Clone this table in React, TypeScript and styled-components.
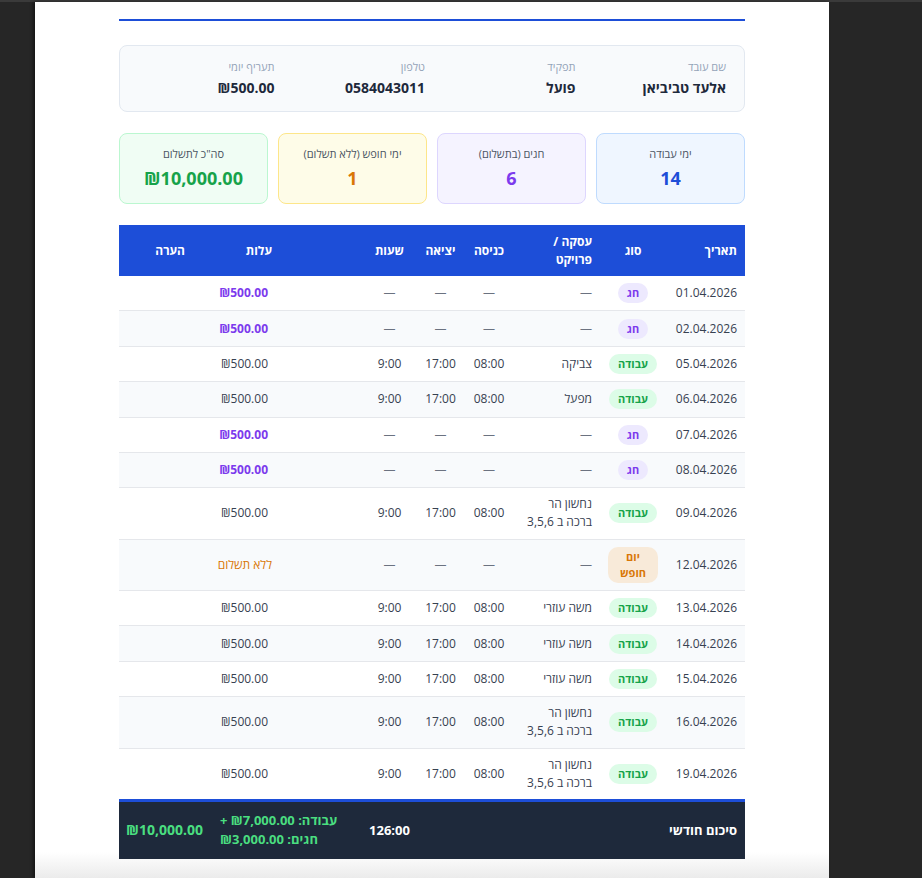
import React from 'react';
import styled, { createGlobalStyle } from 'styled-components';

const GlobalStyle = createGlobalStyle`
  html, body {
    margin: 0;
    padding: 0;
    background: #262626;
    overflow: hidden;
  }
  body {
    font-family: 'Open Sans', 'Noto Sans', 'DejaVu Sans', sans-serif;
  }
`;

type Kind = 'holiday' | 'work' | 'vacation';

type Row = {
  date: string;
  kind: Kind;
  project?: string;
  start?: string;
  end?: string;
  hours?: string;
};

const ROWS: Row[] = [
  { date: '01.04.2026', kind: 'holiday' },
  { date: '02.04.2026', kind: 'holiday' },
  { date: '05.04.2026', kind: 'work', project: 'צביקה', start: '08:00', end: '17:00', hours: '9:00' },
  { date: '06.04.2026', kind: 'work', project: 'מפעל', start: '08:00', end: '17:00', hours: '9:00' },
  { date: '07.04.2026', kind: 'holiday' },
  { date: '08.04.2026', kind: 'holiday' },
  { date: '09.04.2026', kind: 'work', project: 'נחשון הר ברכה ב 3,5,6', start: '08:00', end: '17:00', hours: '9:00' },
  { date: '12.04.2026', kind: 'vacation' },
  { date: '13.04.2026', kind: 'work', project: 'משה עוזרי', start: '08:00', end: '17:00', hours: '9:00' },
  { date: '14.04.2026', kind: 'work', project: 'משה עוזרי', start: '08:00', end: '17:00', hours: '9:00' },
  { date: '15.04.2026', kind: 'work', project: 'משה עוזרי', start: '08:00', end: '17:00', hours: '9:00' },
  { date: '16.04.2026', kind: 'work', project: 'נחשון הר ברכה ב 3,5,6', start: '08:00', end: '17:00', hours: '9:00' },
  { date: '19.04.2026', kind: 'work', project: 'נחשון הר ברכה ב 3,5,6', start: '08:00', end: '17:00', hours: '9:00' },
];

const KIND_LABEL: Record<Kind, string> = {
  holiday: 'חג',
  work: 'עבודה',
  vacation: 'יום חופש',
};

const INFO = [
  { label: 'שם עובד', value: 'אלעד טביביאן' },
  { label: 'תפקיד', value: 'פועל' },
  { label: 'טלפון', value: '0584043011' },
  { label: 'תעריף יומי', value: '₪500.00' },
];

type Tone = 'blue' | 'purple' | 'amber' | 'green';

const STATS: { label: string; value: string; tone: Tone }[] = [
  { label: 'ימי עבודה', value: '14', tone: 'blue' },
  { label: 'חגים (בתשלום)', value: '6', tone: 'purple' },
  { label: 'ימי חופש (ללא תשלום)', value: '1', tone: 'amber' },
  { label: 'סה"כ לתשלום', value: '₪10,000.00', tone: 'green' },
];

const TONES: Record<Tone, { bg: string; border: string; fg: string }> = {
  blue: { bg: '#eff6ff', border: '#bfdbfe', fg: '#1d4ed8' },
  purple: { bg: '#f5f3ff', border: '#ddd6fe', fg: '#7c3aed' },
  amber: { bg: '#fefce8', border: '#fde68a', fg: '#d97706' },
  green: { bg: '#f0fdf4', border: '#bbf7d0', fg: '#16a34a' },
};

export default function App() {
  return (
    <>
      <GlobalStyle />
      <Viewer>
        <TopStrip />
        <Stage>
          <Sheet>
            <Report>
              <HeaderRule />

              <InfoCard>
                {INFO.map((item) => (
                  <InfoItem key={item.label}>
                    <InfoLabel>{item.label}</InfoLabel>
                    <InfoValue>{item.value}</InfoValue>
                  </InfoItem>
                ))}
              </InfoCard>

              <Stats>
                {STATS.map((s) => (
                  <StatCard key={s.label} $tone={s.tone}>
                    <StatLabel>{s.label}</StatLabel>
                    <StatValue $tone={s.tone}>{s.value}</StatValue>
                  </StatCard>
                ))}
              </Stats>

              <Table>
                <colgroup>
                  <col style={{ width: 79 }} />
                  <col style={{ width: 66 }} />
                  <col style={{ width: 86 }} />
                  <col style={{ width: 50 }} />
                  <col style={{ width: 47 }} />
                  <col style={{ width: 55 }} />
                  <col style={{ width: 169 }} />
                  <col style={{ width: 74 }} />
                </colgroup>
                <thead>
                  <tr>
                    <Th>תאריך</Th>
                    <Th $center>סוג</Th>
                    <Th>עסקה / פרויקט</Th>
                    <Th $center>כניסה</Th>
                    <Th $center>יציאה</Th>
                    <Th $center>שעות</Th>
                    <Th $cost>עלות</Th>
                    <Th>הערה</Th>
                  </tr>
                </thead>
                <tbody>
                  {ROWS.map((r) => (
                    <Tr key={r.date}>
                      <Td>{r.date}</Td>
                      <Td $center>
                        <Badge $kind={r.kind}>{KIND_LABEL[r.kind]}</Badge>
                      </Td>
                      <Td>{r.project ?? <Dash>—</Dash>}</Td>
                      <Td $center>{r.start ?? <Dash>—</Dash>}</Td>
                      <Td $center>{r.end ?? <Dash>—</Dash>}</Td>
                      <Td $center>{r.hours ?? <Dash>—</Dash>}</Td>
                      <Td $cost>
                        <Cost $kind={r.kind}>
                          {r.kind === 'vacation' ? 'ללא תשלום' : '₪500.00'}
                        </Cost>
                      </Td>
                      <Td />
                    </Tr>
                  ))}
                </tbody>
                <tfoot>
                  <tr>
                    <FootCell colSpan={8}>
                      <Summary>
                        <SummaryTitle>סיכום חודשי</SummaryTitle>
                        <SummaryHours>126:00</SummaryHours>
                        <SummaryBreakdown>
                          עבודה: ₪7,000.00 + חגים: ₪3,000.00
                        </SummaryBreakdown>
                        <SummaryTotal>₪10,000.00</SummaryTotal>
                      </Summary>
                    </FootCell>
                  </tr>
                </tfoot>
              </Table>
            </Report>
          </Sheet>
        </Stage>
      </Viewer>
    </>
  );
}

const Viewer = styled.div`
  height: 878px;
  display: flex;
  flex-direction: column;
  background: #262626;
`;

const TopStrip = styled.div`
  height: 2px;
  background: #3a3a3a;
`;

const Stage = styled.div`
  flex: 1;
  display: flex;
  padding-left: 35px;
  min-height: 0;
`;

const Sheet = styled.div`
  width: 794px;
  height: 100%;
  box-sizing: border-box;
  padding: 0 84px;
  background: linear-gradient(
    to bottom,
    #ffffff 0,
    #ffffff calc(100% - 26px),
    #ebebeb 100%
  );
  box-shadow: -2px 0 3px rgba(0, 0, 0, 0.45);
  overflow: hidden;
`;

const Report = styled.div`
  direction: rtl;
  display: flex;
  flex-direction: column;
  padding-top: 17px;
  color: #1f2937;
`;

const HeaderRule = styled.div`
  border-bottom: 2px solid #1d4ed8;
  margin-bottom: 24px;
`;

const InfoCard = styled.div`
  display: grid;
  grid-template-columns: repeat(4, 1fr);
  column-gap: 14px;
  padding: 13px 18px;
  background: #f8fafc;
  border: 1px solid #e2e8f0;
  border-radius: 8px;
`;

const InfoItem = styled.div`
  display: flex;
  flex-direction: column;
  gap: 3px;
`;

const InfoLabel = styled.span`
  font-size: 11px;
  line-height: 16px;
  color: #94a3b8;
`;

const InfoValue = styled.span`
  font-size: 14px;
  line-height: 20px;
  font-weight: 700;
  color: #1e293b;
`;

const Stats = styled.div`
  display: grid;
  grid-template-columns: repeat(4, 1fr);
  gap: 10px;
  margin: 21px 0;
`;

const StatCard = styled.div<{ $tone: Tone }>`
  display: flex;
  flex-direction: column;
  align-items: center;
  gap: 4px;
  padding: 12px 12px 13px;
  background: ${(p) => TONES[p.$tone].bg};
  border: 1px solid ${(p) => TONES[p.$tone].border};
  border-radius: 8px;
`;

const StatLabel = styled.span`
  font-size: 11px;
  line-height: 16px;
  color: #4b5563;
`;

const StatValue = styled.span<{ $tone: Tone }>`
  font-size: 18px;
  line-height: 24px;
  font-weight: 700;
  color: ${(p) => TONES[p.$tone].fg};
`;

const Table = styled.table`
  width: 100%;
  table-layout: fixed;
  border-collapse: collapse;
  font-size: 12px;
`;

const Th = styled.th<{ $center?: boolean; $cost?: boolean }>`
  background: #1d4ed8;
  color: #ffffff;
  font-weight: 700;
  font-size: 12px;
  line-height: 18px;
  padding: 7.5px 8px;
  padding-right: ${(p) => (p.$cost ? '90px' : '8px')};
  text-align: ${(p) => (p.$center ? 'center' : 'right')};
  vertical-align: middle;
`;

const Tr = styled.tr`
  border-bottom: 1px solid #e5e7eb;

  &:nth-child(even) {
    background: #f8fafc;
  }
`;

const Td = styled.td<{ $center?: boolean; $cost?: boolean }>`
  padding: 7.2px 8px;
  padding-right: ${(p) => (p.$cost ? '90px' : '8px')};
  line-height: 18px;
  color: #374151;
  text-align: ${(p) => (p.$center ? 'center' : 'right')};
  vertical-align: middle;
`;

const Dash = styled.span`
  color: #6b7280;
`;

const BADGE: Record<Kind, { bg: string; fg: string }> = {
  holiday: { bg: '#ede9fe', fg: '#7c3aed' },
  work: { bg: '#dcfce7', fg: '#16a34a' },
  vacation: { bg: '#f8ead9', fg: '#d97706' },
};

const Badge = styled.span<{ $kind: Kind }>`
  display: inline-block;
  padding: 2px 9px;
  border-radius: 10px;
  font-size: 11px;
  line-height: 16px;
  font-weight: 700;
  background: ${(p) => BADGE[p.$kind].bg};
  color: ${(p) => BADGE[p.$kind].fg};
`;

const Cost = styled.span<{ $kind: Kind }>`
  margin-right: ${(p) => (p.$kind === 'vacation' ? '0' : '4px')};
  color: ${(p) =>
    p.$kind === 'holiday' ? '#7c3aed' : p.$kind === 'vacation' ? '#d97706' : '#374151'};
  font-weight: ${(p) => (p.$kind === 'holiday' ? 700 : 400)};
`;

const FootCell = styled.td`
  padding: 0;
  background: #1e293b;
  border-top: 3px solid #1d4ed8;
`;

const Summary = styled.div`
  display: grid;
  grid-template-columns: 1fr 55px 151px 84px;
  align-items: center;
  padding: 9px 8px 10px;
  color: #ffffff;
`;

const SummaryTitle = styled.span`
  font-size: 13px;
  font-weight: 700;
`;

const SummaryHours = styled.span`
  font-size: 13px;
  font-weight: 700;
  text-align: center;
`;

const SummaryBreakdown = styled.span`
  padding: 0 23px 0 9px;
  text-align: left;
  font-size: 13px;
  line-height: 19px;
  font-weight: 700;
  color: #4ade80;
`;

const SummaryTotal = styled.span`
  padding-right: 8px;
  font-size: 14px;
  font-weight: 700;
  color: #4ade80;
`;
